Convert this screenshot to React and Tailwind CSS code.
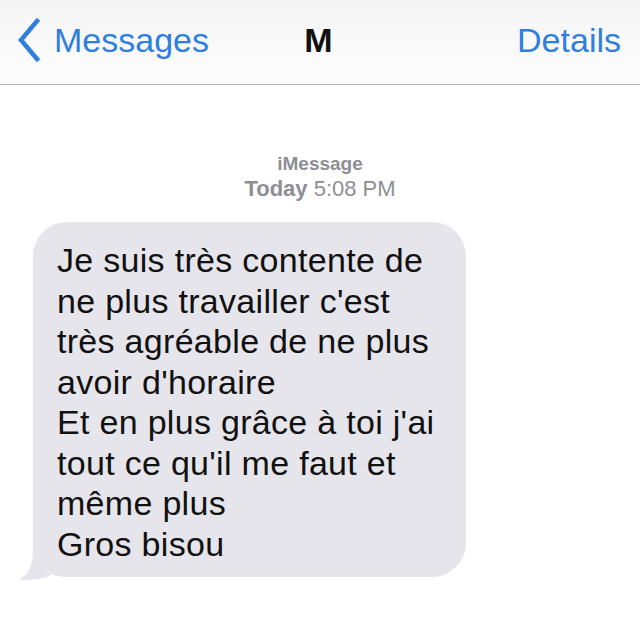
import React from "react";

const lines = [
  "Je suis très contente de",
  "ne plus travailler c'est",
  "très agréable de ne plus",
  "avoir d'horaire",
  "Et en plus grâce à toi j'ai",
  "tout ce qu'il me faut et",
  "même plus",
  "Gros bisou",
];

function App() {
  return (
    <div
      className="w-[640px] h-[640px] bg-white overflow-hidden"
      style={{ fontFamily: '"Liberation Sans", Arial, sans-serif' }}
    >
      {/* Nav bar */}
      <div className="h-[85px] bg-gradient-to-b from-[#f5f5f5] to-[#fdfdfd] border-b border-[#b9b9b9] grid grid-cols-[1fr_auto_1fr] items-center pl-[16px] pr-[19px] pb-[4px]">
        <div className="flex items-center gap-[14px] text-[#2f7fe0]">
          <svg width="24" height="44" viewBox="0 0 24 44">
            <path
              d="M21 3 L5 22 L21 41"
              fill="none"
              stroke="#2f7fe0"
              strokeWidth="4.5"
              strokeLinecap="square"
            />
          </svg>
          <span className="text-[34px]">Messages</span>
        </div>
        <span className="text-[34px] font-bold text-[#111]">M</span>
        <span className="text-[34px] text-[#2f7fe0] justify-self-end">Details</span>
      </div>

      {/* Timestamp */}
      <div className="mt-[67px] flex flex-col items-center text-[#8e8e93]">
        <span className="font-bold text-[19px] leading-[24px]">iMessage</span>
        <span className="text-[22px] leading-[26px]">
          <span className="font-bold">Today</span> 5:08 PM
        </span>
      </div>

      {/* Bubble */}
      <div className="relative ml-[33px] mt-[20px] w-[433px]">
        <div className="relative z-10 bg-[#e6e5eb] rounded-[34px] pl-[24px] pt-[18px] pb-[13px]">
          {lines.map((l) => (
            <div
              key={l}
              className="text-[34px] leading-[40.5px] tracking-[0.3px] text-[#111] whitespace-nowrap"
            >
              {l}
            </div>
          ))}
        </div>
        <svg
          className="absolute left-[-14px] bottom-[-3px]"
          width="50"
          height="48"
          viewBox="0 0 50 48"
        >
          <path
            d="M14 0 L26 0 L26 36 Q30 44 46 45 L50 45 L50 40 Q36 40 30 44 Q22 48 0 48 Q14 40 14 18 Z"
            fill="#e6e5eb"
          />
        </svg>
      </div>
    </div>
  );
}

export default App;
